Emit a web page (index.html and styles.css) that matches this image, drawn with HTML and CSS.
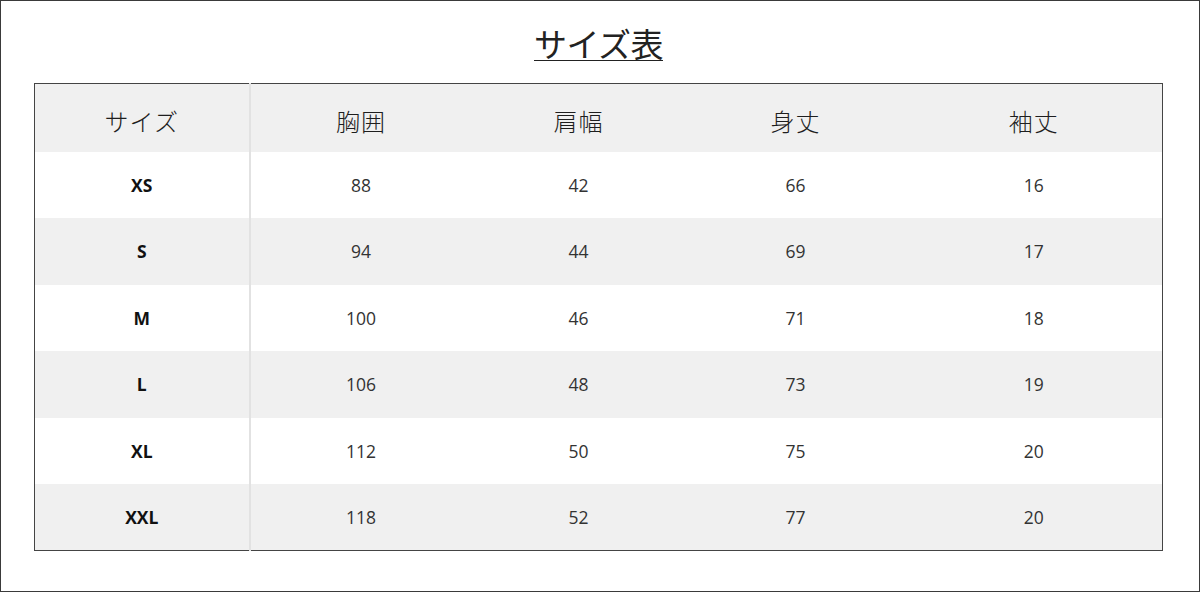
FILE: index.html
```html
<!DOCTYPE html>
<html lang="ja">
<head>
<meta charset="utf-8">
<link rel="stylesheet" href="styles.css">
</head>
<body>
<div class="frame">
  <div class="title-wrap"><h1 class="title">サイズ表</h1></div>
  <table class="size-table">
    <colgroup>
      <col class="c1"><col class="c2"><col class="c3"><col class="c4"><col class="c5">
    </colgroup>
    <thead>
      <tr class="head"><th class="first">サイズ</th><th>胸囲</th><th>肩幅</th><th>身丈</th><th>袖丈</th></tr>
    </thead>
    <tbody>
      <tr><td class="first">XS</td><td>88</td><td>42</td><td>66</td><td>16</td></tr>
      <tr class="alt"><td class="first">S</td><td>94</td><td>44</td><td>69</td><td>17</td></tr>
      <tr><td class="first">M</td><td>100</td><td>46</td><td>71</td><td>18</td></tr>
      <tr class="alt"><td class="first">L</td><td>106</td><td>48</td><td>73</td><td>19</td></tr>
      <tr><td class="first">XL</td><td>112</td><td>50</td><td>75</td><td>20</td></tr>
      <tr class="alt"><td class="first">XXL</td><td>118</td><td>52</td><td>77</td><td>20</td></tr>
    </tbody>
  </table>
</div>
</body>
</html>
```
FILE: styles.css
```css
html, body {
  margin: 0;
  padding: 0;
  background: #fff;
}
.frame {
  width: 1200px;
  height: 592px;
  box-sizing: border-box;
  border: 1px solid #3a3a3a;
  display: flex;
  flex-direction: column;
  align-items: flex-start;
}
.title-wrap {
  width: 100%;
  height: 82px;
  display: flex;
  justify-content: center;
  align-items: flex-start;
}
.title {
  margin: 25px 0 0 -3px;
  font-family: "Noto Sans CJK JP", sans-serif;
  font-weight: 400;
  font-size: 33px;
  line-height: 34px;
  color: #222;
  border-bottom: 1.5px solid #222;
  padding: 0;
  letter-spacing: -0.5px;
}
.size-table {
  margin-left: 33px;
  width: 1129px;
  border-collapse: collapse;
  border: 1px solid #444;
  table-layout: fixed;
}
.c1 { width: 215px; }
.c2 { width: 222px; }
.c3 { width: 214px; }
.c4 { width: 220px; }
.c5 { width: auto; }
.size-table th,
.size-table td {
  padding: 0;
  text-align: center;
  vertical-align: middle;
}
.head {
  height: 68px;
  background: #f0f0f0;
}
.head th {
  padding-top: 5px;
  font-family: "Noto Sans CJK JP", sans-serif;
  font-weight: 300;
  font-size: 24px;
  color: #1e1e1e;
  letter-spacing: 1px;
}
tbody tr {
  height: 66.5px;
  background: #fff;
}
tbody tr.alt {
  background: #f0f0f0;
}
tbody td {
  padding-top: 5px;
  font-family: "Open Sans", "Noto Sans", sans-serif;
  font-size: 17.5px;
  color: #333;
}
tbody td.first {
  font-weight: 700;
  color: #111;
}
.size-table .first {
  border-right: 2px solid #e2e2e2;
}
```
